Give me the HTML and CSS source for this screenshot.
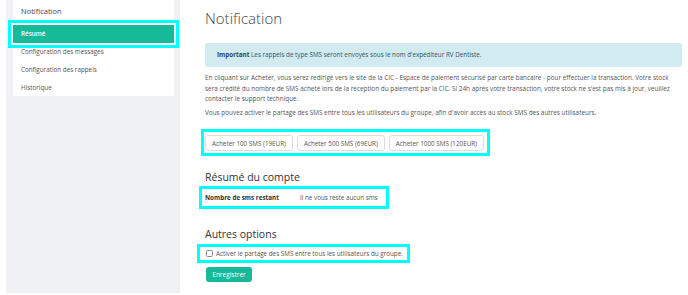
FILE: index.html
```html
<!DOCTYPE html>
<html lang="fr">
<head>
	<meta charset="UTF-8">
	<title>Notification</title>
	<link rel="stylesheet" href="styles.css">
</head>
<body>
	<div class="page">
		<aside class="sidebar">
			<div class="panel">
				<div class="panel_title">Notification</div>
				<ul class="menu">
					<li class="active">Résumé</li>
					<li>Configuration des messages</li>
					<li>Configuration des rappels</li>
					<li>Historique</li>
				</ul>
			</div>
		</aside>
		<main class="content">
			<h1>Notification</h1>
			<div class="alert"><strong>Important</strong> Les rappels de type SMS seront envoyés sous le nom d'expéditeur RV Dentiste.</div>
			<p class="intro">En cliquant sur Acheter, vous serez redirigé vers le site de la CIC - Espace de paiement sécurisé par carte bancaire - pour effectuer la transaction. Votre stock sera crédité du nombre de SMS acheté lors de la reception du paiement par la CIC. Si 24h après votre transaction, votre stock ne s'est pas mis à jour, veuillez contacter le support technique.</p>
			<p class="intro2">Vous pouvez activer le partage des SMS entre tous les utilisateurs du groupe, afin d'avoir accès au stock SMS des autres utilisateurs.</p>
			<div class="buy">
				<button class="btn">Acheter 100 SMS (19EUR)</button>
				<button class="btn">Acheter 500 SMS (69EUR)</button>
				<button class="btn">Acheter 1000 SMS (120EUR)</button>
			</div>
			<h2 class="first">Résumé du compte</h2>
			<div class="account">
				<span class="account_label">Nombre de sms restant</span>
				<span>Il ne vous reste aucun sms</span>
			</div>
			<h2 class="second">Autres options</h2>
			<label class="option"><input type="checkbox"><span>Activer le partage des SMS entre tous les utilisateurs du groupe.</span></label>
			<button class="save">Enregistrer</button>
		</main>
	</div>
</body>
</html>
```
FILE: styles.css
```css
*{
	margin:0;
	padding:0;
	box-sizing: border-box;
}
body{
	background-color: #fff;
	font-family: "Open Sans", "Noto Sans", sans-serif;
	color: #555;
	font-size: 6.3px;
}
.page{
	display: flex;
	align-items: flex-start;
}
.sidebar{
	width:174px;
	height:293px;
	margin-left:6px;
	padding:0 6px 0 7px;
	background-color: #f0f1f4;
}
.panel{
	background-color: #fff;
}
.panel_title{
	padding: 4px 0 0 8px;
	height: 25px;
	line-height: 14px;
	font-size: 7.5px;
	color: #444;
}
.menu{
	list-style-type: none;
}
.menu li{
	height:18px;
	line-height:18px;
	padding-left:8px;
	color: #555;
}
.menu li:last-child{
	height:17px;
	line-height:17px;
}
.menu .active{
	background-color: #16b998;
	color: #fff;
	font-weight: 600;
	outline: 3px solid #0ff;
	outline-offset: 2px;
}
.content{
	flex:1;
	margin:0 6px 0 25px;
	padding-top:8px;
}
h1{
	font-size:15px;
	font-weight:300;
	line-height:20px;
	color:#444;
}
.alert{
	margin-top:15px;
	padding:7px 12px;
	line-height:10px;
	border-radius:2px;
	background-color:#d2ebf1;
	color:#2f5862;
}
.alert strong{
	color:#2b4650;
}
.intro,.intro2{
	margin-right:10px;
	font-size:6.4px;
	line-height:10.5px;
}
.intro{
	margin-top:6px;
}
.intro2{
	margin-top:3.5px;
}
.buy{
	display:flex;
	gap:4px;
	width:max-content;
	margin:13.5px 0 0 -1px;
	padding:3px 3px 2px 1px;
	outline:3px solid #0ff;
}
.btn{
	height:16px;
	padding:0 6px;
	border:1px solid #dcdcdc;
	border-radius:3px;
	background-color:#fff;
	font-family: inherit;
	font-size:6.3px;
	color:#555;
}
h2{
	font-size:10.5px;
	font-weight:normal;
	line-height:14px;
	color:#333;
}
h2.first{
	margin-top:17.4px;
}
h2.second{
	margin-top:21px;
}
.account{
	display:flex;
	width:max-content;
	margin:4.6px 0 0 -3px;
	padding:4px 8px 3px 3px;
	line-height:10px;
	outline:3px solid #0ff;
}
.account_label{
	width:95px;
	font-weight:bold;
	color:#333;
}
.option{
	display:flex;
	align-items:center;
	gap:3px;
	width:max-content;
	margin:6px 0 0 -5px;
	padding:2px 4px 1px 5px;
	line-height:10px;
	outline:3px solid #0ff;
}
.option input{
	appearance:none;
	width:7px;
	height:7px;
	margin-left:1px;
	border:1px solid #888;
	border-radius:1.5px;
	background-color:#fff;
}
.save{
	display:block;
	width:46px;
	height:15px;
	margin:7px 0 0 1px;
	border:none;
	border-radius:3px;
	background-color:#16b998;
	color:#fff;
	font-family: inherit;
	font-size:6.5px;
}
```
